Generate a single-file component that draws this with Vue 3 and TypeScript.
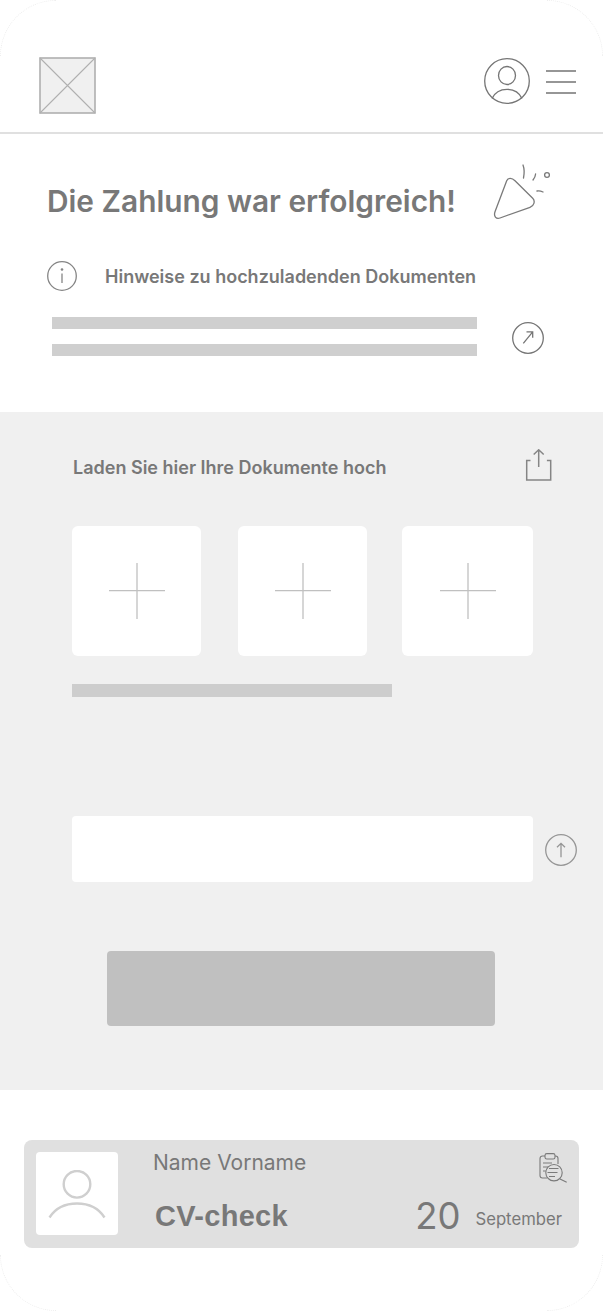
<script setup lang="ts">
const uploadSlots = [0, 1, 2]
</script>

<template>
  <div class="page">
    <span class="corner corner--tl" />
    <span class="corner corner--tr" />
    <span class="corner corner--bl" />
    <span class="corner corner--br" />

    <header class="topbar">
      <svg class="logo" width="57" height="57" viewBox="0 0 57 57">
        <rect x="1" y="1" width="55" height="55" fill="#f0f0f0" stroke="#b0b0b0" stroke-width="1.6" />
        <path d="M1 1 56 56M56 1 1 56" stroke="#b0b0b0" stroke-width="1.1" fill="none" />
      </svg>
      <div class="topbar__actions">
        <svg width="46" height="46" viewBox="0 0 46 46" fill="none" stroke="#757575" stroke-width="1.3">
          <circle cx="23" cy="23" r="22.3" />
          <ellipse cx="23" cy="17.5" rx="8.5" ry="9" />
          <path d="M8 40.5C11 34 16.5 31.300 23 31.300s12 2.700 15 9.200" />
        </svg>
        <div class="burger"><span /><span /><span /></div>
      </div>
    </header>

    <section class="notice">
      <div class="notice__head">
        <h1>Die Zahlung war erfolgreich!</h1>
        <svg class="party" width="62" height="58" viewBox="0 0 62 58" fill="none" stroke="#7a7a7a" stroke-width="1.3" stroke-linecap="round">
          <path d="M16.700 17.700 5 48.700C3.500 53 6 56.500 10 55L40 44.300C44 43 45.500 38 42.700 35.300L25 17.700C22 14.800 18 14.500 16.700 17.700Z" />
          <path d="M33 2C34.500 6 34.500 10 33.500 15M45.600 11C45.500 13 44.500 15 43 17M47 28C49 27.500 51 28 53 29" />
          <circle cx="57" cy="12" r="2.400" />
        </svg>
      </div>

      <div class="notice__hint">
        <svg width="30" height="30" viewBox="0 0 30 30" fill="none" stroke="#858585" stroke-width="1.3">
          <circle cx="15" cy="15" r="14.300" />
          <circle cx="15" cy="8.500" r="1.300" fill="#858585" stroke="none" />
          <path d="M15 12.500V22" />
        </svg>
        <p>Hinweise zu hochzuladenden Dokumenten</p>
      </div>

      <div class="notice__body">
        <div class="lines"><span /><span /></div>
        <svg class="notice__link" width="32" height="32" viewBox="0 0 32 32" fill="none" stroke="#757575" stroke-width="1.300">
          <circle cx="16" cy="16" r="15.300" />
          <path d="M11.300 21.300 20.700 9.900M14.500 9.900h6.200v5.800" />
        </svg>
      </div>
    </section>

    <section class="upload">
      <div class="upload__head">
        <h2>Laden Sie hier Ihre Dokumente hoch</h2>
        <svg width="28" height="34" viewBox="0 0 28 34" fill="none" stroke="#858585" stroke-width="1.500">
          <path d="M5.500 11.500H1.700V31H25.700V11.500H21.900" />
          <path d="M13.700 18V.800M8.700 5.500l5-4.700 5 4.700" />
        </svg>
      </div>

      <div class="slots">
        <div v-for="slot in uploadSlots" :key="slot" class="slot">
          <svg width="56" height="56" viewBox="0 0 56 56" stroke="#c0c0c0" stroke-width="1.300">
            <path d="M0 27.600H56M28 0V56" />
          </svg>
        </div>
      </div>

      <div class="upload__bar" />

      <div class="upload__field">
        <div class="field" />
        <svg class="field__icon" width="32" height="32" viewBox="0 0 32 32" fill="none" stroke="#969696" stroke-width="1.300">
          <circle cx="16" cy="16" r="15.300" />
          <path d="M16 23.300V9.300M12 13.300l4-4 4 4" />
        </svg>
      </div>

      <button class="submit" type="button" aria-label="Absenden" />
    </section>

    <footer class="foot">
      <article class="cv">
        <div class="cv__photo">
          <svg width="58" height="52" viewBox="0 0 58 52" fill="none" stroke="#cfcfcf" stroke-width="2.400">
            <circle cx="29" cy="14.300" r="13.300" />
            <path d="M1.500 47.500C7.500 38 17 33.500 29 33.500S50.500 38 56.500 47.500" />
          </svg>
        </div>
        <div class="cv__info">
          <div class="cv__name">Name Vorname</div>
          <div class="cv__title">CV-check</div>
        </div>
        <div class="cv__meta">
          <svg width="30" height="32" viewBox="0 0 30 32" fill="none" stroke="#7a7a7a" stroke-width="1.100">
            <path d="M7 3H4.500A2.500 2.500 0 0 0 2 5.500v17A2.500 2.500 0 0 0 4.500 25H9" />
            <path d="M17 3h.5A2.500 2.500 0 0 1 20 5.500V11" />
            <rect x="7" y=".600" width="10" height="5.400" rx="1.800" />
            <path d="M5 10h9M5 14h5M5 18h3" />
            <circle cx="16" cy="19.700" r="8.200" />
            <path d="M11 15.500h9.500M9.500 19.500h10M11 23.500h6M22 26l6.700 3.300" />
          </svg>
          <div class="cv__date">
            <span class="cv__day">20</span>
            <span class="cv__month">September</span>
          </div>
        </div>
      </article>
    </footer>
  </div>
</template>

<style>
html,
body {
  margin: 0;
  background: #fff;
}
</style>

<style scoped>
.page {
  position: relative;
  width: 603px;
  height: 1311px;
  overflow: hidden;
  background: #fff;
  font-family: Inter, 'Liberation Sans', sans-serif;
  color: #787878;
}

.corner {
  position: absolute;
  width: 56px;
  height: 56px;
  box-sizing: border-box;
  border: 0 dotted #eeeeee;
}

.corner--tl {
  top: 0;
  left: 0;
  border-top-width: 1px;
  border-left-width: 1px;
  border-top-left-radius: 56px;
}

.corner--tr {
  top: 0;
  right: 0;
  border-top-width: 1px;
  border-right-width: 1px;
  border-top-right-radius: 56px;
}

.corner--bl {
  bottom: 0;
  left: 0;
  border-bottom-width: 1px;
  border-left-width: 1px;
  border-bottom-left-radius: 56px;
}

.corner--br {
  bottom: 0;
  right: 0;
  border-bottom-width: 1px;
  border-right-width: 1px;
  border-bottom-right-radius: 56px;
}

.topbar {
  box-sizing: border-box;
  height: 134px;
  padding: 57px 27px 0 39px;
  display: flex;
  justify-content: space-between;
  align-items: flex-start;
  border-bottom: 2px solid #e0e0e0;
}

.topbar svg {
  display: block;
}

.topbar__actions {
  display: flex;
  align-items: flex-start;
  gap: 16px;
  margin-top: 1px;
}

.burger {
  width: 30px;
  display: flex;
  flex-direction: column;
  gap: 9.500px;
  margin-top: 12px;
}

.burger span {
  height: 1.500px;
  background: #969696;
}

.notice {
  box-sizing: border-box;
  height: 278px;
  padding: 29px 0 0 47px;
}

.notice__head {
  display: flex;
  align-items: flex-start;
  height: 56px;
}

.notice__head h1 {
  margin: 20px 0 0;
  font-size: 29.850px;
  line-height: 36px;
  font-weight: 600;
  white-space: nowrap;
}

.party {
  flex: none;
  margin-left: 34px;
}

.notice__hint {
  display: flex;
  align-items: center;
  gap: 28px;
  margin-top: 42px;
}

.notice__hint p {
  margin: 0;
  font-size: 18px;
  font-weight: 600;
}

.notice__body {
  display: flex;
  align-items: center;
  margin: 26px 0 0 5px;
  gap: 35px;
}

.notice__link {
  margin-top: 3px;
}

.lines {
  display: flex;
  flex-direction: column;
  gap: 15px;
}

.lines span {
  display: block;
  width: 425px;
  height: 12px;
  background: #cfcfcf;
}

.upload {
  box-sizing: border-box;
  height: 678px;
  background: #f0f0f0;
  padding: 37px 0 0 72px;
}

.upload__head {
  display: flex;
  justify-content: space-between;
  align-items: center;
  width: 481px;
  height: 34px;
}

.upload__head h2 {
  margin: 3px 0 0 1px;
  font-size: 18px;
  font-weight: 600;
}

.slots {
  display: flex;
  gap: 37px;
  margin-top: 43px;
}

.slot {
  width: 129px;
  height: 130px;
  background: #fff;
  border-radius: 6px;
  display: flex;
  align-items: center;
  justify-content: center;
}

.slot:last-child {
  width: 131px;
  margin-left: -2px;
}

.upload__bar {
  width: 320px;
  height: 13px;
  margin-top: 28px;
  background: #cdcdcd;
}

.upload__field {
  display: flex;
  align-items: center;
  gap: 12px;
  margin-top: 119px;
}

.field {
  width: 461px;
  height: 66px;
  background: #fff;
  border-radius: 4px;
}

.field__icon {
  margin-top: 2px;
}

.submit {
  display: block;
  width: 388px;
  height: 75px;
  margin: 69px 0 0 35px;
  padding: 0;
  border: 0;
  border-radius: 4px;
  background: #c0c0c0;
}

.foot {
  padding: 50px 24px 0;
}

.cv {
  box-sizing: border-box;
  height: 108px;
  padding: 12px 17px 0 12px;
  display: flex;
  align-items: flex-start;
  background: #e0e0e0;
  border-radius: 8px;
}

.cv__photo {
  width: 82px;
  height: 83px;
  background: #fff;
  border-radius: 4px;
  display: flex;
  align-items: flex-start;
  justify-content: center;
}

.cv__photo svg {
  margin-top: 18px;
}

.cv__info {
  margin: -1px 0 0 35px;
}

.cv__name {
  font-size: 21px;
  line-height: 24px;
}

.cv__title {
  margin: 24px 0 0 2px;
  font-family: 'Liberation Sans', Arial, sans-serif;
  font-size: 29px;
  line-height: 34px;
  letter-spacing: 0.3px;
  font-weight: 700;
}

.cv__meta {
  margin-left: auto;
  display: flex;
  flex-direction: column;
  align-items: flex-end;
}

.cv__meta svg {
  margin-right: -6px;
  margin-top: 1px;
}

.cv__date {
  display: flex;
  align-items: center;
  gap: 15px;
  margin-top: 9px;
}

.cv__day {
  font-size: 36.500px;
  line-height: 44px;
}

.cv__month {
  font-size: 16.700px;
  margin-top: 6px;
}
</style>
